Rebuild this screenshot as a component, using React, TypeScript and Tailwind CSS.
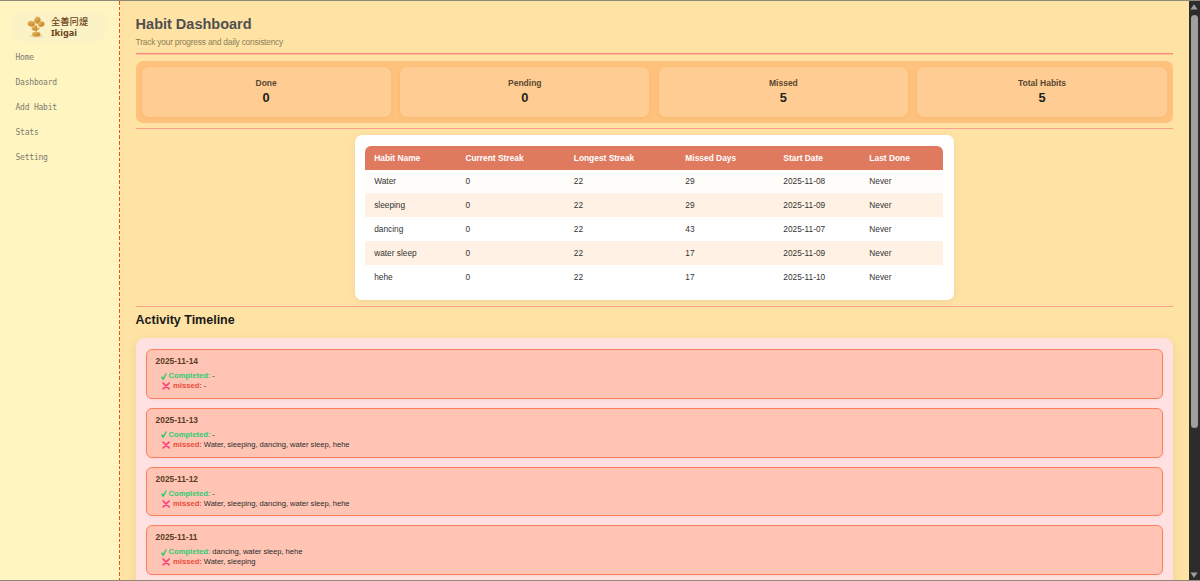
const nav = ["Home", "Dashboard", "Add Habit", "Stats", "Setting"];

const stats = [
  { label: "Done", value: 0 },
  { label: "Pending", value: 0 },
  { label: "Missed", value: 5 },
  { label: "Total Habits", value: 5 },
];

const columns = ["Habit Name", "Current Streak", "Longest Streak", "Missed Days", "Start Date", "Last Done"];

const habits = [
  ["Water", "0", "22", "29", "2025-11-08", "Never"],
  ["sleeping", "0", "22", "29", "2025-11-09", "Never"],
  ["dancing", "0", "22", "43", "2025-11-07", "Never"],
  ["water sleep", "0", "22", "17", "2025-11-09", "Never"],
  ["hehe", "0", "22", "17", "2025-11-10", "Never"],
];

const days = [
  { date: "2025-11-14", completed: "-", missed: "-" },
  { date: "2025-11-13", completed: "-", missed: "Water, sleeping, dancing, water sleep, hehe" },
  { date: "2025-11-12", completed: "-", missed: "Water, sleeping, dancing, water sleep, hehe" },
  { date: "2025-11-11", completed: "dancing, water sleep, hehe", missed: "Water, sleeping" },
];

const rowGrid = "grid grid-cols-[91.2px_108.4px_111.6px_98px_86px_1fr] pl-[9.3px] items-center";

function Logo() {
  return (
    <div className="ml-[11px] mt-[10px] flex h-[32px] w-[97px] items-center rounded-[16px] bg-[#fbf2c6] pl-[16px]">
      <svg width="19" height="22" viewBox="0 0 19 22">
        <defs>
          <linearGradient id="leaf" x1="0" y1="0" x2="1" y2="1">
            <stop offset="0" stopColor="#edbf6a" />
            <stop offset="1" stopColor="#bd7a1e" />
          </linearGradient>
        </defs>
        <ellipse cx="9.3" cy="20.2" rx="6.8" ry="1.4" fill="#eadaa6" />
        <path d="M9.2 9v8M9.2 14.5L6 12M9.3 14.5L12.5 12" stroke="#d5a452" strokeWidth="1.3" fill="none" />
        <ellipse cx="10.4" cy="4.1" rx="3.1" ry="3.5" transform="rotate(20 10.4 4.1)" fill="url(#leaf)" />
        <ellipse cx="4.3" cy="7.7" rx="3.7" ry="2.8" transform="rotate(12 4.3 7.7)" fill="url(#leaf)" />
        <ellipse cx="14.1" cy="8.1" rx="3.4" ry="2.7" transform="rotate(-20 14.1 8.1)" fill="url(#leaf)" />
        <ellipse cx="7.6" cy="12.2" rx="3.1" ry="2.3" transform="rotate(-15 7.6 12.2)" fill="url(#leaf)" />
        <ellipse cx="9.2" cy="18.2" rx="4.2" ry="2.4" fill="url(#leaf)" />
      </svg>
      <div className="ml-[5px] text-[#6b4216]">
        <div className="whitespace-nowrap font-['Noto_Sans_CJK_JP',sans-serif] text-[9.3px] font-medium leading-[11px]">全善冋煶</div>
        <div className="font-['Noto_Sans',sans-serif] text-[9.2px] font-bold leading-[11px]">Ikigai</div>
      </div>
    </div>
  );
}

function Check() {
  return (
    <svg className="mr-[1.5px] shrink-0" width="6" height="7" viewBox="0 0 6 7">
      <path d="M0 4.1L1.3 3.2L2.2 4.4L4.8 0.2L6 0.4L2.8 6.8L1.5 6.8Z" fill="#2ecc71" />
    </svg>
  );
}

function Cross() {
  return (
    <svg className="ml-[0.5px] mr-[3px] shrink-0" width="8.5" height="8" viewBox="0 0 9 8">
      <path d="M1.2 0.9L7.5 7.1M7.5 0.9L1.2 7.1" stroke="#f8467e" strokeWidth="1.8" strokeLinecap="round" />
    </svg>
  );
}

export default function App() {
  return (
    <div className="flex h-[581px] w-[1200px] overflow-hidden border-y border-[#8f8a78] bg-[#ffe3a4] font-['Liberation_Sans',Arial,sans-serif]">
      <aside className="flex w-[119px] shrink-0 flex-col bg-[#fff5c0]">
        <Logo />
        <nav className="ml-[15.5px] mt-[2px] flex flex-col font-['DejaVu_Sans_Mono',monospace] text-[8px] tracking-[-0.22px] text-[#7d7c72]">
          {nav.map((item) => (
            <a key={item} className="flex h-[25px] items-center">{item}</a>
          ))}
        </nav>
      </aside>
      <div className="w-[1px] shrink-0 bg-[repeating-linear-gradient(to_bottom,#fb4a1c_0px,#fb4a1c_3.6px,#fff5c0_3.6px,#fff5c0_5.6px)]" />

      <main className="flex min-w-0 flex-1 flex-col pl-[15.6px] pr-[15.9px]">
        <h1 className="mt-[14px] text-[14.5px] font-bold leading-[18px] text-[#4f4f4f]">Habit Dashboard</h1>
        <p className="mt-[4px] text-[8.4px] leading-[10px] tracking-[-0.21px] text-[#8c7f58]">Track your progress and daily consistency</p>
        <hr className="mt-[6px] h-[2px] shrink-0 border-0 border-b border-[#ffb894] bg-[#ff8a80]" />

        <section className="mt-[6px] grid h-[61.5px] shrink-0 grid-cols-4 gap-[9.5px] rounded-[7px] bg-[#ffc27c] p-[6px]">
          {stats.map((s) => (
            <div key={s.label} className="flex flex-col items-center rounded-[7px] bg-[#ffcd93] pt-[10px] shadow-[0_1px_4px_rgba(0,0,0,0.05)]">
              <div className="text-[8.5px] font-bold leading-[12px] text-[#5a4730]">{s.label}</div>
              <div className="mt-[1px] text-[12.8px] font-bold leading-[16px] text-[#1f1f1f]">{s.value}</div>
            </div>
          ))}
        </section>

        <hr className="mt-[5.5px] h-px shrink-0 border-0 bg-[#ff9d8c]" />

        <section className="mt-[6px] h-[165px] w-[599px] shrink-0 self-center rounded-[7px] bg-white px-[10.3px] pt-[11px] shadow-[0_2px_10px_rgba(0,0,0,0.06)]">
          <div className={`${rowGrid} h-[23.5px] rounded-t-[6px] bg-[#e07a5f] pt-px text-[8.4px] font-bold text-white`}>
            {columns.map((c) => (
              <div key={c} className="whitespace-nowrap">{c}</div>
            ))}
          </div>
          {habits.map((row, i) => (
            <div
              key={row[0]}
              className={`${rowGrid} h-[23.95px] text-[8.3px] text-[#333333] ${i % 2 ? "bg-[#fff2e4]" : i === 0 ? "bg-[#fffdfa]" : "bg-white"}`}
            >
              {row.map((cell, j) => (
                <div key={j} className="whitespace-nowrap">{cell}</div>
              ))}
            </div>
          ))}
        </section>

        <hr className="mt-[6px] h-px shrink-0 border-0 bg-[#ff9d8c]" />

        <h2 className="mt-[5px] text-[12.5px] font-bold leading-[16px] text-[#1a1a1a]">Activity Timeline</h2>

        <section className="mt-[10px] flex shrink-0 flex-col gap-[9px] rounded-[9px] bg-[#ffe1e1] px-[10px] pb-[20px] pt-[11px] shadow-[0_3px_12px_rgba(0,0,0,0.07)]">
          {days.map((d) => (
            <article key={d.date} className="h-[49.8px] rounded-[6px] border border-[#ff7f5c] bg-[#ffc4b4] pl-[9px] pt-[6px] shadow-[0_1px_3px_rgba(0,0,0,0.05)]">
              <div className="text-[8.4px] font-bold leading-[11px] text-[#5a3c28]">{d.date}</div>
              <div className="mt-[4px] pl-[5.5px] text-[7.6px] leading-[10px] text-[#2b2b2b]">
                <div className="flex h-[10px] items-center">
                  <Check />
                  <b className="mr-[2px] text-[#2ecc71]">Completed:</b>
                  <span className="tracking-[-0.03px]">{d.completed}</span>
                </div>
                <div className="flex h-[10px] items-center">
                  <Cross />
                  <b className="mr-[2px] text-[#e74c3c]">missed:</b>
                  <span className="tracking-[-0.03px]">{d.missed}</span>
                </div>
              </div>
            </article>
          ))}
        </section>
      </main>

      <div className="flex w-[11.5px] shrink-0 flex-col items-center bg-[#2c2c2c] pb-[2px] pt-[3px]">
        <svg width="8" height="6" viewBox="0 0 8 6">
          <path d="M4 0.3L7.6 5.6H0.4Z" fill="#9f9f9f" />
        </svg>
        <div className="mt-[5px] h-[413px] w-[7px] rounded-full bg-[#9f9f9f]" />
        <svg className="mt-auto" width="8" height="6" viewBox="0 0 8 6">
          <path d="M4 5.7L7.6 0.4H0.4Z" fill="#9f9f9f" />
        </svg>
      </div>
    </div>
  );
}
